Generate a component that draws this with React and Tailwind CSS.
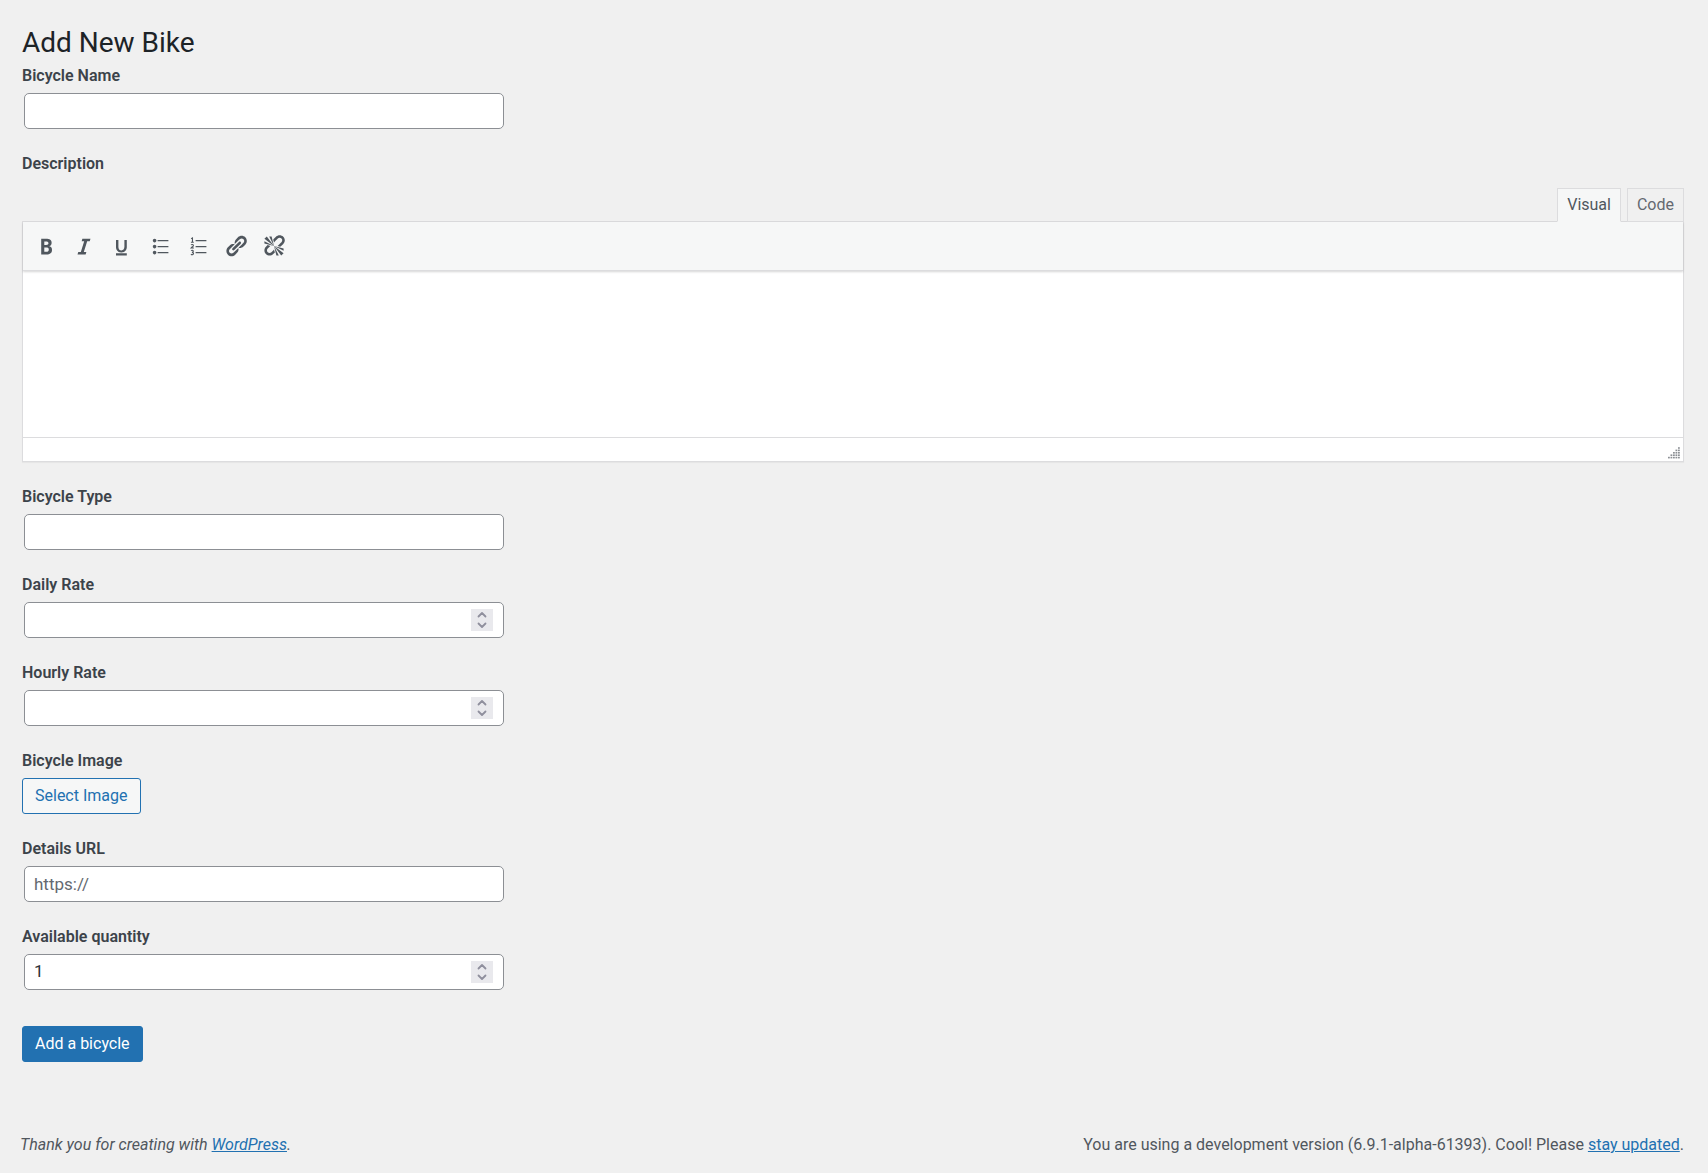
import { useState } from "react";

const icons = [
  {
    name: "Bold",
    path: "M6 4v13h4.54c1.37 0 2.46-.33 3.26-1 .8-.66 1.2-1.58 1.2-2.77 0-.84-.17-1.51-.51-2.01s-.9-.85-1.67-1.03v-.09c.57-.1 1.02-.4 1.36-.9s.51-1.13.51-1.91c0-1.14-.39-1.98-1.17-2.5C12.75 4.26 11.5 4 9.78 4H6zm2.57 5.15V6.26h1.36c.73 0 1.27.11 1.61.32.34.22.51.58.51 1.07 0 .54-.16.92-.47 1.15s-.82.35-1.51.35h-1.5zm0 2.19h1.6c1.44 0 2.16.53 2.16 1.61 0 .6-.17 1.05-.51 1.34s-.86.43-1.57.43H8.57v-3.38z",
  },
  {
    name: "Italic",
    path: "M14.78 6h-2.13l-2.8 9h2.12l-.62 2H4.6l.62-2h2.14l2.8-9H8.03l.62-2h6.75z",
  },
  {
    name: "Underline",
    path: "M14 5h-2v5.71c0 1.99-1.12 2.98-2.45 2.98-1.32 0-2.55-1-2.55-2.96V5H5v5.87c0 1.91 1 4.54 4.48 4.54 3.49 0 4.52-2.58 4.52-4.5V5zm0 13v-2H5v2h9z",
  },
  {
    name: "Bulleted list",
    path: "M5.5 7C4.67 7 4 6.33 4 5.5 4 4.68 4.67 4 5.5 4 6.32 4 7 4.68 7 5.5 7 6.33 6.32 7 5.5 7zM8 5h9v1H8V5zm-2.5 7c-.83 0-1.5-.67-1.5-1.5C4 9.68 4.67 9 5.5 9c.82 0 1.5.68 1.5 1.5 0 .83-.68 1.5-1.5 1.5zM8 10h9v1H8v-1zm-2.5 7c-.83 0-1.5-.67-1.5-1.5 0-.82.67-1.5 1.5-1.5.82 0 1.5.68 1.5 1.5 0 .83-.68 1.5-1.5 1.5zM8 15h9v1H8v-1z",
  },
  {
    name: "Numbered list",
    path: "M8 5h9v1H8zM8 10h9v1H8zM8 15h9v1H8z",
    stroke: "M4.3 4l1.1-.7v3.4M4.1 6.9h2.4M4.2 9.2c.5-.7 2-.6 2 .3 0 .8-1.2 1.3-2 2.2h2.4M4.2 13.9c.6-.5 1.9-.4 1.9.5 0 .6-.5.9-1.2.9.8 0 1.4.3 1.4 1 0 1-1.5 1.2-2.2.6",
  },
  {
    name: "Insert link",
    path: "M17.74 2.76c1.68 1.69 1.68 4.41 0 6.1l-1.53 1.52c-1.12 1.12-2.7 1.47-4.14 1.09l2.62-2.61.76-.77.76-.76c.84-.84.84-2.2 0-3.04-.84-.85-2.2-.85-3.04 0l-.77.76-3.38 3.38c-.37-1.44-.02-3.02 1.1-4.14l1.52-1.53c1.69-1.68 4.42-1.68 6.1 0zM8.59 13.43l5.34-5.34c.42-.42.42-1.1 0-1.52-.44-.43-1.13-.39-1.53 0l-5.33 5.34c-.42.42-.42 1.1 0 1.52.44.43 1.13.39 1.52 0zm-.76 2.29l4.14-4.15c.38 1.44.03 3.02-1.09 4.14l-1.52 1.53c-1.69 1.68-4.41 1.68-6.1 0-1.68-1.68-1.68-4.42 0-6.1l1.53-1.52c1.12-1.12 2.7-1.47 4.14-1.1l-4.14 4.15c-.85.84-.85 2.2 0 3.05.84.84 2.2.84 3.04 0z",
  },
  {
    name: "Remove link",
    path: "M17.74 2.26c1.68 1.69 1.68 4.41 0 6.1l-1.53 1.52c-.32.33-.69.58-1.08.77L13 10l1.69-1.64.76-.77.76-.76c.84-.84.84-2.2 0-3.04-.84-.85-2.2-.85-3.04 0l-.77.76-.76.76L10 7l-.65-2.14c.19-.38.44-.75.77-1.07l1.52-1.53c1.69-1.68 4.42-1.68 6.1 0zM2 4l8 6-6-8zm4-2l4 8-2-8H6zM2 6l8 4-8-2V6zm7.36 7.69L10 13l.74 2.35-1.38 1.39c-1.69 1.68-4.41 1.68-6.1 0-1.68-1.68-1.68-4.42 0-6.1l1.39-1.38L7 10l-.69.64-1.52 1.53c-.85.84-.85 2.2 0 3.04.84.85 2.2.85 3.04 0zM18 16l-8-6 6 8zm-4 2l-4-8 2 8h2zm4-4l-8-4 8 2v2z",
  },
];

const Field = ({ id, label, children }) => (
  <div className="mb-[25px]">
    <label htmlFor={id} className="mb-[7px] block w-fit leading-5 font-semibold">
      {label}
    </label>
    {children}
  </div>
);

const TextInput = (props) => (
  <input
    {...props}
    className="ml-0.5 block h-9 w-full max-w-[480px] rounded-[5px] border border-[#8c8f94] bg-white px-[9px] text-[17px] text-[#2c3338] placeholder:text-[#646970] focus:border-[#2271b1] focus:outline-none"
  />
);

const NumberInput = ({ id, value, onChange }) => {
  const step = (amount) => onChange(String(Math.max(0, Number(value) + amount)));

  return (
    <div className="ml-0.5 flex h-9 w-full max-w-[480px] items-center rounded-[5px] border border-[#8c8f94] bg-white pr-2.5 pl-[9px] focus-within:border-[#2271b1]">
      <input
        id={id}
        type="number"
        value={value}
        onChange={(e) => onChange(e.target.value)}
        className="min-w-0 flex-1 appearance-none text-[17px] text-[#2c3338] [-moz-appearance:textfield] focus:outline-none [&::-webkit-inner-spin-button]:appearance-none"
      />
      <div className="flex w-[22px] flex-col bg-[#e9e9ed] text-[#8f8f9d]">
        <button type="button" onClick={() => step(1)} aria-label="Increase" className="flex h-[11px] items-center justify-center">
          <svg className="h-[11px] w-[22px]" viewBox="0 0 22 11" fill="none" stroke="currentColor" strokeWidth="1.8" strokeLinecap="round" strokeLinejoin="round">
            <path d="M7.5 7.5L11 4l3.5 3.5" />
          </svg>
        </button>
        <button type="button" onClick={() => step(-1)} aria-label="Decrease" className="flex h-[11px] items-center justify-center">
          <svg className="h-[11px] w-[22px]" viewBox="0 0 22 11" fill="none" stroke="currentColor" strokeWidth="1.8" strokeLinecap="round" strokeLinejoin="round">
            <path d="M7.5 3.5L11 7l3.5-3.5" />
          </svg>
        </button>
      </div>
    </div>
  );
};

// columns of the resize grip, shortest first
const grip = [1, 2, 3, 4, 5];

const Editor = () => {
  const [mode, setMode] = useState("visual");
  const active = "border-b-[#f6f7f7] bg-[#f6f7f7] text-[#50575e]";
  const inactive = "border-b-[#dcdcde] bg-[#f0f0f0] text-[#646970]";

  return (
    <div className="mb-[25px]">
      <div className="relative z-10 -mb-px flex justify-end gap-1.5">
        <button
          type="button"
          onClick={() => setMode("visual")}
          className={`h-[34px] border border-[#dcdcde] px-[9px] ${mode === "visual" ? active : inactive}`}
        >
          Visual
        </button>
        <button
          type="button"
          onClick={() => setMode("code")}
          className={`h-[34px] border border-[#dcdcde] px-[9px] ${mode === "code" ? active : inactive}`}
        >
          Code
        </button>
      </div>
      <div className="border border-[#dcdcde] bg-white shadow-[0_1px_1px_rgba(0,0,0,0.04)]">
        <div className="relative flex h-[49px] items-center border-b border-[#dcdcde] bg-[#f6f7f7] pl-1 text-[#50575e] shadow-[0_1px_2px_rgba(0,0,0,0.16)]">
          {icons.map((icon) => (
            <button key={icon.name} type="button" aria-label={icon.name} className="flex h-9 w-[38px] items-center justify-center">
              <svg className="h-6 w-6" viewBox="0 0 20 20" fill="currentColor">
                <path d={icon.path} />
                {icon.stroke && <path d={icon.stroke} fill="none" stroke="currentColor" strokeWidth="0.9" />}
              </svg>
            </button>
          ))}
        </div>
        <textarea
          id="description"
          className={`block h-[166px] w-full resize-none p-3 text-[17px] text-[#2c3338] focus:outline-none ${mode === "code" ? "font-mono" : ""}`}
        />
        <div className="flex h-6 items-end justify-end border-t border-[#dcdcde] pr-[3px] pb-0.5">
          <svg className="h-3 w-3" viewBox="0 0 12 12" fill="#8c8f94">
            {grip.map((count, col) =>
              grip.slice(0, count).map((row) => (
                <rect key={`${col}-${row}`} x={col * 2.5} y={12.2 - row * 2.4} width="1.8" height="1.6" />
              ))
            )}
          </svg>
        </div>
      </div>
    </div>
  );
};

const App = () => {
  const [dailyRate, setDailyRate] = useState("");
  const [hourlyRate, setHourlyRate] = useState("");
  const [quantity, setQuantity] = useState("1");

  return (
    <div className="flex min-h-screen flex-col bg-[#f0f0f0] font-['Roboto',sans-serif] text-[16px] text-[#3c434a]">
      <main className="flex-1 pt-[25px] pr-6 pl-[22px]">
        <h1 className="mb-[5px] text-[28px] leading-9 text-[#1d2327]">Add New Bike</h1>
        <form onSubmit={(e) => e.preventDefault()}>
          <Field id="name" label="Bicycle Name">
            <TextInput id="name" type="text" />
          </Field>

          <label htmlFor="description" className="mb-3.5 block w-fit leading-5 font-semibold">
            Description
          </label>
          <Editor />

          <Field id="type" label="Bicycle Type">
            <TextInput id="type" type="text" />
          </Field>
          <Field id="daily-rate" label="Daily Rate">
            <NumberInput id="daily-rate" value={dailyRate} onChange={setDailyRate} />
          </Field>
          <Field id="hourly-rate" label="Hourly Rate">
            <NumberInput id="hourly-rate" value={hourlyRate} onChange={setHourlyRate} />
          </Field>
          <Field id="image" label="Bicycle Image">
            <button
              id="image"
              type="button"
              className="block h-9 rounded-[3px] border border-[#2271b1] bg-[#f6f7f7] px-3 text-[#2271b1] hover:bg-[#f0f0f1]"
            >
              Select Image
            </button>
          </Field>
          <Field id="url" label="Details URL">
            <TextInput id="url" type="url" placeholder="https://" />
          </Field>
          <Field id="quantity" label="Available quantity">
            <NumberInput id="quantity" value={quantity} onChange={setQuantity} />
          </Field>

          <button
            type="submit"
            className="mt-9 block h-9 rounded-[3px] border border-[#2271b1] bg-[#2271b1] px-3 text-white hover:bg-[#135e96]"
          >
            Add a bicycle
          </button>
        </form>
      </main>

      <footer className="flex items-center justify-between gap-6 pt-12 pr-6 pb-4 pl-5 leading-6 text-[#50575e]">
        <p className="italic">
          Thank you for creating with{" "}
          <a href="#wordpress" className="text-[#2271b1] underline">
            WordPress
          </a>
          .
        </p>
        <p>
          You are using a development version (6.9.1-alpha-61393). Cool! Please{" "}
          <a href="#update" className="text-[#2271b1] underline">
            stay updated
          </a>
          .
        </p>
      </footer>
    </div>
  );
};

export default App;
